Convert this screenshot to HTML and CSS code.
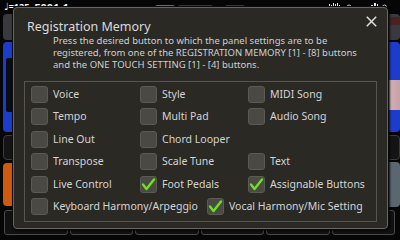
FILE: index.html
```html
<!DOCTYPE html>
<html>
<head>
<meta charset="utf-8">
<link rel="stylesheet" href="styles.css">
</head>
<body>
<div class="screen">
  <div class="topbar">
    <div class="tb-left">
      <span class="tempo"><span class="note">♩</span>=125</span>
      <span class="style-no">E001.1</span>
    </div>
    <span class="tab tab-orange"></span>
    <span class="tab tab-gray1"></span>
    <span class="tab tab-gray2"></span>
    <div class="status">
      <svg class="st-icon" width="26" height="10" viewBox="0 0 26 10">
        <rect x="0" y="4" width="1" height="5" fill="#e8e8e8"/>
        <rect x="2" y="2" width="1" height="7" fill="#e8e8e8"/>
        <rect x="4" y="3" width="1" height="6" fill="#e8e8e8"/>
        <rect x="6" y="1" width="1" height="8" fill="#e8e8e8"/>
        <rect x="8" y="2" width="1" height="7" fill="#e8e8e8"/>
        <rect x="10" y="1" width="1" height="8" fill="#e8e8e8"/>
        <rect x="12" y="3" width="1" height="6" fill="#e8e8e8"/>
        <circle cx="22" cy="5" r="2" fill="none" stroke="#cfcfcf" stroke-width="1"/>
      </svg>
      <svg class="st-icon st2" width="20" height="10" viewBox="0 0 20 10">
        <rect x="0" y="5" width="2" height="4" fill="#e8e8e8"/>
        <rect x="3" y="3" width="2" height="6" fill="#e8e8e8"/>
        <rect x="6" y="1" width="2" height="8" fill="#e8e8e8"/>
        <rect x="9" y="2" width="1" height="7" fill="#e8e8e8"/>
        <circle cx="16.5" cy="5" r="2" fill="none" stroke="#cfcfcf" stroke-width="1"/>
      </svg>
    </div>
  </div>

  <div class="main">
    <div class="side side-left">
      <div class="blk blk-gray"></div>
      <div class="blk blk-blue"><div class="blue-inner"></div></div>
      <div class="blk blk-dark"></div>
      <div class="blk blk-orange"></div>
    </div>
    <div class="center"></div>
    <div class="side side-right">
      <div class="blk blk-gray"><span class="red-mark"></span></div>
      <div class="blk blk-blue"><div class="photo"></div></div>
      <div class="blk blk-dark"></div>
      <div class="blk blk-slate"></div>
    </div>
  </div>

  <div class="bottombar">
    <div class="bbtn"></div>
    <div class="bbtn"></div>
    <div class="bbtn"></div>
    <div class="bbtn"></div>
    <div class="bbtn"></div>
    <div class="bbtn"></div>
  </div>

  <div class="dialog">
    <div class="dlg-head">
      <h1 class="dlg-title">Registration Memory</h1>
      <span class="close">
        <svg width="11" height="11" viewBox="0 0 11 11"><path d="M0.8 0.8 L10.2 10.2 M10.2 0.8 L0.8 10.2" stroke="#e0e0e0" stroke-width="1.5" fill="none"/></svg>
      </span>
    </div>
    <p class="dlg-desc">Press the desired button to which the panel settings are to be<br>registered, from one of the REGISTRATION MEMORY [1] - [8] buttons<br>and the ONE TOUCH SETTING [1] - [4] buttons.</p>
    <div class="options">
      <div class="opt"><span class="cb"></span>Voice</div>
      <div class="opt"><span class="cb"></span>Style</div>
      <div class="opt"><span class="cb"></span>MIDI Song</div>
      <div class="opt"><span class="cb"></span>Tempo</div>
      <div class="opt"><span class="cb"></span>Multi Pad</div>
      <div class="opt"><span class="cb"></span>Audio Song</div>
      <div class="opt"><span class="cb"></span>Line Out</div>
      <div class="opt"><span class="cb"></span>Chord Looper</div>
      <div class="opt opt-empty"></div>
      <div class="opt"><span class="cb"></span>Transpose</div>
      <div class="opt"><span class="cb"></span>Scale Tune</div>
      <div class="opt"><span class="cb"></span>Text</div>
      <div class="opt"><span class="cb"></span>Live Control</div>
      <div class="opt"><span class="cb on"><svg width="17" height="17" viewBox="0 0 17 17"><path d="M3 8.5 L6.5 13 L14 3.5" stroke="#6be21c" stroke-width="2.4" fill="none" stroke-linecap="round" stroke-linejoin="round"/></svg></span>Foot Pedals</div>
      <div class="opt"><span class="cb on"><svg width="17" height="17" viewBox="0 0 17 17"><path d="M3 8.5 L6.5 13 L14 3.5" stroke="#6be21c" stroke-width="2.4" fill="none" stroke-linecap="round" stroke-linejoin="round"/></svg></span>Assignable Buttons</div>
      <div class="opt-last">
        <div class="opt"><span class="cb"></span>Keyboard Harmony/Arpeggio</div>
        <div class="opt"><span class="cb on"><svg width="17" height="17" viewBox="0 0 17 17"><path d="M3 8.5 L6.5 13 L14 3.5" stroke="#6be21c" stroke-width="2.4" fill="none" stroke-linecap="round" stroke-linejoin="round"/></svg></span>Vocal Harmony/Mic Setting</div>
      </div>
    </div>
  </div>
</div>
</body>
</html>
```

FILE: styles.css
```css
* { box-sizing: border-box; margin: 0; padding: 0; }
html, body { width: 400px; height: 240px; overflow: hidden; background: #000; }
body { font-family: "Noto Sans", "DejaVu Sans", sans-serif; color: #d6d6d6; }

.screen {
  position: relative;
  width: 400px;
  height: 240px;
  display: flex;
  flex-direction: column;
  background: #060606;
}

/* ---------- background screen ---------- */
.topbar {
  height: 14px;
  display: flex;
  align-items: flex-start;
  color: #fff;
  padding-left: 4px;
}
.tb-left { width: 151px; display: flex; align-items: flex-start; }
.tempo { font-size: 9px; line-height: 10px; margin-top: 1px; font-weight: bold; }
.note { font-size: 10px; }
.style-no { font-size: 11px; line-height: 12px; margin-left: 5px; margin-top: 2px; font-weight: bold; }
.tab { display: block; margin-top: 5px; height: 9px; border-radius: 2px 2px 0 0; }
.tab-orange { width: 20px; background: #c9560e; }
.tab-gray1 { width: 35px; margin-left: 3px; background: #3a3a3c; }
.tab-gray2 { width: 20px; margin-left: 12px; background: #3a3a3c; }
.status { margin-left: 82px; display: flex; margin-top: 2px; }
.st2 { margin-left: 15px; }

.main { height: 193px; display: flex; }
.side { width: 60px; display: flex; flex-direction: column; }
.side-left { padding-left: 3px; }
.center { flex: 1; }
.blk { border-radius: 4px; }
.blk-gray { height: 26px; background: #3a393d; position: relative; }
.blk-blue { height: 90px; margin-top: 2px; background: #1c3dcc; padding: 16px 4px 20px 3px; }
.blk-dark { height: 25px; margin-top: 3px; background: #141414; border: 1px solid #3c3c3c; }
.blk-orange { height: 43px; margin-top: 3px; background: #cf5a0f; }
.blk-slate { height: 45px; margin-top: 2px; background: #5a6670; }
.blue-inner { height: 100%; background: #0b0b12; border-radius: 2px; }
.photo { height: 30px; margin-top: 22px; background: linear-gradient(90deg, #7a4e56, #e8d2d4 45%, #c8a0a8); }
.side-right .blk-blue { padding: 16px 0 0 0; }
.red-mark { position: absolute; right: 0; top: 3px; width: 10px; height: 8px; background: #4a2224; border-radius: 2px; }

.bottombar {
  margin-top: 3px;
  height: 25px;
  display: flex;
  gap: 2px;
  padding: 0 5px 0 4px;
}
.bbtn { flex: 1; background: #111; border: 1px solid #4a4a4a; border-radius: 3px; }

/* ---------- dialog ---------- */
.dialog {
  position: absolute;
  left: 13px;
  top: 7px;
  width: 375px;
  height: 222px;
  background: #2a2924;
  border: 1px solid #66655f;
  border-radius: 4px;
  box-shadow: 0 0 0 1px #0c0c0c, 1px 1px 2px 1px rgba(0,0,0,0.8);
  padding: 10px 10px 6px 10px;
  display: flex;
  flex-direction: column;
}
.dlg-head { display: flex; justify-content: space-between; align-items: flex-start; }
.dlg-title {
  font-size: 12.5px;
  line-height: 17px;
  font-weight: normal;
  color: #dcdcdc;
  padding-left: 3px;
}
.close { display: block; width: 11px; height: 11px; margin-top: -2px; }
.close svg { display: block; }

.dlg-desc {
  margin-top: 0;
  padding-left: 29px;
  font-size: 9.5px;
  line-height: 12px;
  color: #cfcfcf;
}

.options {
  margin-top: 10px;
  flex: 1;
  border: 1px solid #56554f;
  padding: 4px 6px 5px 6px;
  display: grid;
  grid-template-columns: 109px 108px 1fr;
  grid-auto-rows: 17px;
  row-gap: 5.4px;
}
.opt {
  display: flex;
  align-items: center;
  gap: 5px;
  font-size: 10.5px;
  line-height: 17px;
  color: #d4d4d4;
  white-space: nowrap;
}
.opt-last {
  grid-column: 1 / -1;
  display: grid;
  grid-template-columns: 176px 1fr;
}
.cb {
  display: block;
  flex: none;
  width: 17px;
  height: 17px;
  background: #4a4944;
  border: 1px solid #5b5a55;
  border-radius: 3px;
  position: relative;
}
.cb svg { position: absolute; left: -1px; top: -1px; }
```
